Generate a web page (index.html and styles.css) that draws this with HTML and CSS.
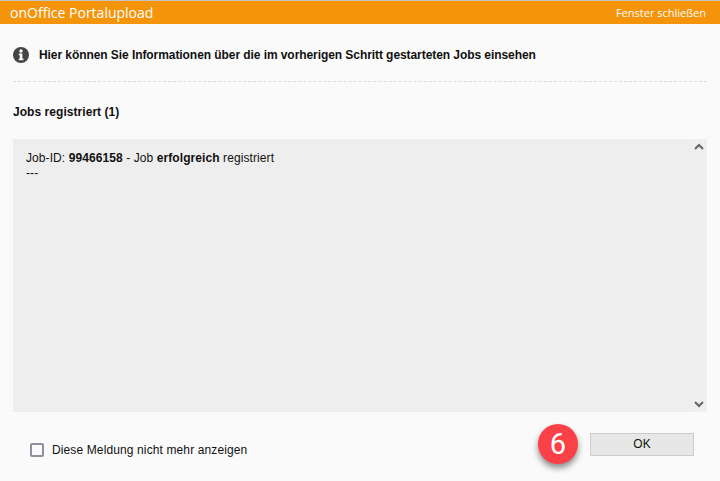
FILE: index.html
```html
<!DOCTYPE html>
<html lang="de">
<head>
<meta charset="utf-8">
<title>onOffice Portalupload</title>
<link rel="stylesheet" href="styles.css">
</head>
<body>
<div class="dialog">
  <header class="titlebar">
    <span class="title">onOffice Portalupload</span>
    <span class="close">Fenster schließen</span>
  </header>
  <div class="info">
    <svg class="info-icon" viewBox="0 0 16 16" width="16" height="16" aria-hidden="true">
      <circle cx="8" cy="8" r="8" fill="#444"/>
      <circle cx="8" cy="4" r="1.7" fill="#fafafa"/>
      <path d="M5.8 6.6h3.6v5h1v1.7H5.8v-1.7h1v-3.3h-1z" fill="#fafafa"/>
    </svg>
    <strong class="info-text">Hier können Sie Informationen über die im vorherigen Schritt gestarteten Jobs einsehen</strong>
  </div>
  <h2 class="section">Jobs registriert (1)</h2>
  <div class="log">
    <div class="log-text">
      Job-ID: <b>99466158</b> - Job <b>erfolgreich</b> registriert<br>
      ---
    </div>
    <div class="scrollbar">
      <svg viewBox="0 0 10 7" width="10" height="7" aria-hidden="true"><path d="M1 6l4-4 4 4" fill="none" stroke="#666" stroke-width="2"/></svg>
      <svg viewBox="0 0 10 7" width="10" height="7" aria-hidden="true"><path d="M1 1l4 4 4-4" fill="none" stroke="#666" stroke-width="2"/></svg>
    </div>
  </div>
  <footer class="footer">
    <label class="check"><span class="box"></span><span class="check-text">Diese Meldung nicht mehr anzeigen</span></label>
    <div class="actions">
      <span class="badge">6</span>
      <button class="ok" type="button">OK</button>
    </div>
  </footer>
</div>
</body>
</html>
```
FILE: styles.css
```css
html, body {
  margin: 0;
  padding: 0;
  height: 100%;
}
body {
  background: #fafafa;
  color: #111;
  font-family: "Liberation Sans", Arial, sans-serif;
  font-size: 12px;
  overflow: hidden;
}
.dialog {
  display: flex;
  flex-direction: column;
  height: 481px;
}
.titlebar {
  display: flex;
  justify-content: space-between;
  align-items: center;
  height: 23px;
  padding: 0 14px 0 10px;
  border-top: 1px solid #c4c4c4;
  background: #f3940b;
  color: #fff;
  font-family: "Open Sans", sans-serif;
}
.title {
  font-size: 14px;
}
.close {
  font-size: 11px;
}
.info {
  display: flex;
  align-items: center;
  gap: 10px;
  height: 58px;
  margin: 0 13px;
  padding-top: 4px;
  box-sizing: border-box;
  border-bottom: 1px dashed #dcdcdc;
}
.info-icon {
  flex: none;
}
.info-text {
  letter-spacing: -0.07px;
}
.section {
  margin: 23px 13px 20px;
  font-size: 12px;
  line-height: 14px;
  font-weight: bold;
  letter-spacing: 0.05px;
}
.log {
  display: flex;
  height: 273px;
  margin: 0 13px;
  background: #eeeeee;
}
.log-text {
  flex: 1;
  padding: 12px 13px;
  line-height: 15px;
  letter-spacing: 0.085px;
}
.scrollbar {
  display: flex;
  flex-direction: column;
  justify-content: space-between;
  align-items: center;
  width: 16px;
  padding: 4px 0;
  box-sizing: border-box;
  background: #efefef;
}
.footer {
  display: flex;
  justify-content: space-between;
  align-items: center;
  margin-top: 12px;
  padding: 0 26px 0 30px;
}
.check {
  display: flex;
  align-items: center;
  gap: 8px;
  margin-top: 11px;
}
.check-text {
  letter-spacing: 0.12px;
}
.box {
  width: 10px;
  height: 10px;
  border: 2px solid #8f8f9d;
  border-radius: 2px;
}
.actions {
  display: flex;
  align-items: center;
  gap: 12px;
}
.badge {
  display: flex;
  align-items: center;
  justify-content: center;
  width: 40px;
  height: 40px;
  border-radius: 50%;
  background: #fb4148;
  color: #fff;
  font-family: Roboto, sans-serif;
  font-size: 29px;
  box-shadow: 0 4px 6px rgba(0, 0, 0, 0.45);
}
.ok {
  width: 104px;
  height: 23px;
  padding: 0;
  border: 1px solid #cccccc;
  background: #e7e7e7;
  color: #111;
  font-family: "Liberation Sans", Arial, sans-serif;
  font-size: 12px;
}
```
